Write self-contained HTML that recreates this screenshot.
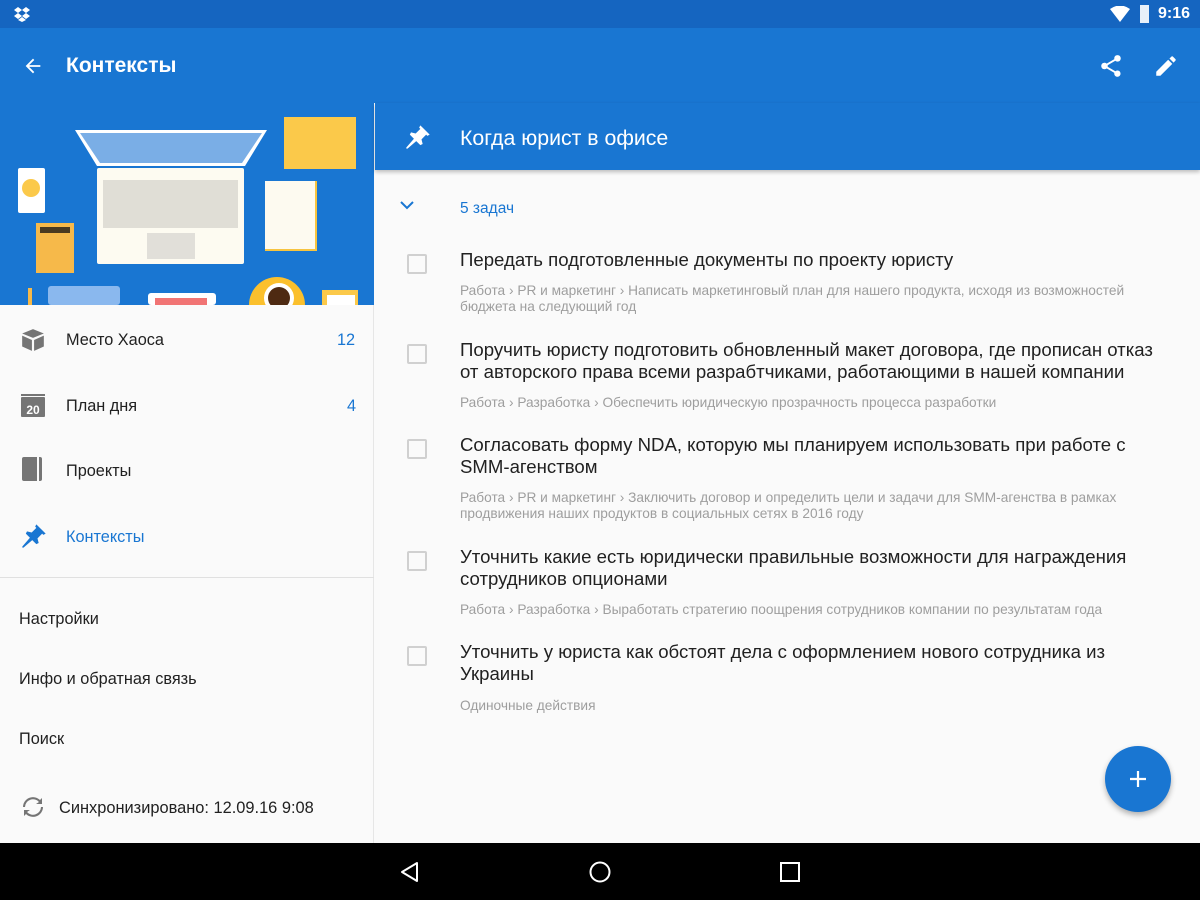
<!DOCTYPE html>
<html><head><meta charset="utf-8"><style>
*{margin:0;padding:0;box-sizing:border-box}
body{width:1200px;height:900px;overflow:hidden;background:#fafafa;font-family:"Liberation Sans","DejaVu Sans",sans-serif;position:relative}
.abs{position:absolute}
.sb{left:0;top:0;width:1200px;height:28px;background:#1565c0}
.tb{left:0;top:28px;width:1200px;height:75px;background:#1976d2}
.t{color:#fff;font-size:22px}
.left{left:0;top:103px;width:374px;height:740px;background:#fafafa;border-right:1px solid #e6e6e6}
.item{position:absolute;left:66px;font-size:16.3px;color:#212121}
.cnt{position:absolute;font-size:16.3px;color:#1976d2}
.rh{left:375px;top:103px;width:825px;height:67px;background:#1976d2;box-shadow:0 2px 4px rgba(0,0,0,.25)}
.task{position:absolute;left:460px;width:716px;font-size:18.6px;line-height:22px;color:#212121}
.sub{position:absolute;left:460px;width:712px;font-size:13.7px;line-height:16px;color:#9e9e9e}
.cb{position:absolute;left:407px;width:20px;height:20px;border:2px solid #d0d0d0;border-radius:2px}
.nav{left:0;top:843px;width:1200px;height:57px;background:#000}
</style></head><body>
<div class="abs sb"></div>
<svg class="abs" style="left:13px;top:6px" width="18" height="16" viewBox="0 0 18 16"><path d="M5 1L1 4l4 3 4-3zM13 1l-4 3 4 3 4-3zM1 10l4 3 4-3-4-3zM17 10l-4-3-4 3 4 3zM5 14l4 2 4-2-4-3z" fill="#fff"/></svg>
<svg class="abs" style="left:1110px;top:6px" width="20" height="16" viewBox="0 0 20 16"><path d="M0 3Q10-4 20 3L10 16z" fill="#fff"/></svg>
<div class="abs" style="left:1140px;top:5px;width:9px;height:18px;background:#fff;opacity:.9"></div>
<div class="abs" style="left:1158px;top:5px;color:#fff;font-size:16px;font-weight:bold">9:16</div>
<div class="abs tb"></div>
<svg class="abs" style="left:22px;top:55px" width="22" height="22" viewBox="0 0 24 24"><path d="M20 11H7.8l5.6-5.6L12 4l-8 8 8 8 1.4-1.4L7.8 13H20z" fill="#fff"/></svg>
<div class="abs t" style="left:66px;top:54px;font-size:21px;font-weight:bold">Контексты</div>
<svg class="abs" style="left:1098px;top:53px" width="26" height="26" viewBox="0 0 24 24"><path d="M18 16.1c-.8 0-1.4.3-2 .8l-7.1-4.2c.1-.2.1-.5.1-.7s0-.5-.1-.7L16 7.2c.5.5 1.2.8 2 .8 1.7 0 3-1.3 3-3s-1.3-3-3-3-3 1.3-3 3c0 .2 0 .5.1.7L8 9.8C7.5 9.3 6.8 9 6 9c-1.700 0-3 1.3-3 3s1.3 3 3 3c.8 0 1.5-.3 2-.8l7.1 4.2c-.1.2-.1.4-.1.6 0 1.6 1.3 2.9 2.9 2.9s2.9-1.3 2.9-2.9-1.2-2.9-2.8-2.9z" fill="#fff"/></svg>
<svg class="abs" style="left:1153px;top:53px" width="26" height="26" viewBox="0 0 24 24"><path d="M3 17.3V21h3.8L17.8 10l-3.8-3.8zM20.7 7c.4-.4.4-1 0-1.4l-2.3-2.3c-.4-.4-1-.4-1.4 0l-1.8 1.8 3.8 3.8z" fill="#fff"/></svg>
<div class="abs left"></div>
<svg class="abs" style="left:0;top:103px" width="374" height="202" viewBox="0 0 374 202">
<rect width="374" height="202" fill="#1976d2"/>
<path d="M75 27H267L245 63H97z" fill="#fff"/><path d="M80 30H262L242 60H100z" fill="#7aaee6"/>
<rect x="97" y="65" width="147" height="96" rx="2" fill="#fdfbf1"/>
<rect x="103" y="77" width="135" height="48" fill="#e0ded6"/><rect x="147" y="130" width="48" height="26" fill="#e1dfd9"/>
<rect x="284" y="14" width="72" height="52" fill="#fbc94a"/>
<rect x="18" y="65" width="27" height="45" rx="2" fill="#fff"/><circle cx="31" cy="85" r="9" fill="#fbc94a"/>
<rect x="36" y="120" width="38" height="50" fill="#f6b94a"/><rect x="40" y="124" width="30" height="6" fill="#4a3a20"/>
<rect x="265" y="78" width="52" height="70" fill="#f7c440"/><rect x="265" y="78" width="50" height="68" fill="#fdfaf0"/>
<circle cx="277" cy="202" r="28" fill="#fbc02d"/><circle cx="279" cy="195" r="15" fill="#fff"/><circle cx="279" cy="195" r="11" fill="#4e2a12"/>
<rect x="48" y="183" width="72" height="19" rx="3" fill="#8ab8ee"/>
<rect x="148" y="190" width="68" height="12" rx="3" fill="#fff"/><rect x="155" y="195" width="52" height="7" fill="#f17474"/>
<rect x="322" y="187" width="36" height="15" fill="#fbc94a"/><rect x="327" y="192" width="28" height="10" fill="#fff"/>
<rect x="28" y="185" width="4" height="17" fill="#f6b94a"/>
</svg>
<svg class="abs" style="left:20px;top:327px" width="26" height="26" viewBox="0 0 24 24"><path d="M2 6l10-4 10 4-10 4zM2 8l9 4v10l-9-4zM22 8l-9 4v10l9-4z" fill="#757575"/></svg>
<div class="item" style="top:331px">Место Хаоса</div><div class="cnt" style="top:331px;left:337px">12</div>
<svg class="abs" style="left:20px;top:392px" width="26" height="26" viewBox="0 0 26 26"><rect x="1" y="5" width="24" height="20" rx="1" fill="#757575"/><rect x="1" y="2" width="24" height="2" fill="#757575"/><text x="13" y="22" font-size="12" font-weight="bold" fill="#fff" text-anchor="middle" font-family="Liberation Sans">20</text></svg>
<div class="item" style="top:397px">План дня</div><div class="cnt" style="top:397px;left:347px">4</div>
<svg class="abs" style="left:22px;top:457px" width="22" height="26" viewBox="0 0 22 26"><rect x="0" y="0" width="20" height="24" rx="2" fill="#757575"/><rect x="15" y="0" width="2" height="24" fill="#fafafa"/></svg>
<div class="item" style="top:462px">Проекты</div>
<svg class="abs" style="left:20px;top:522px" width="28" height="28" viewBox="0 0 24 24"><path d="M14 2l8 8-2 1-1-1-4 4 1 4-2 1-3.5-3.5L3 22l-1 0 0-1 6.5-7.5L5 10l1-2 4 1 4-4-1-1z" fill="#1976d2"/></svg>
<div class="item" style="top:528px;color:#1976d2">Контексты</div>
<div class="abs" style="left:0;top:577px;width:374px;height:1px;background:#e0e0e0"></div>
<div class="abs" style="left:19px;top:610px;font-size:16.3px;color:#212121">Настройки</div>
<div class="abs" style="left:19px;top:670px;font-size:16.3px;color:#212121">Инфо и обратная связь</div>
<div class="abs" style="left:19px;top:730px;font-size:16.3px;color:#212121">Поиск</div>
<svg class="abs" style="left:21px;top:795px" width="24" height="24" viewBox="0 0 24 24"><path d="M4 12a8 8 0 0 1 14-5l-3 2h6V3l-2 2A10 10 0 0 0 2 12zM20 12a8 8 0 0 1-14 5l3-2H3v6l2-2a10 10 0 0 0 17-7z" fill="#757575"/></svg>
<div class="abs" style="left:59px;top:799px;font-size:16.4px;color:#212121">Синхронизировано: 12.09.16 9:08</div>
<div class="abs rh"></div>
<svg class="abs" style="left:404px;top:123px" width="28" height="28" viewBox="0 0 24 24"><path d="M14 2l8 8-2 1-1-1-4 4 1 4-2 1-3.5-3.5L3 22l-1 0 0-1 6.5-7.5L5 10l1-2 4 1 4-4-1-1z" fill="#fff"/></svg>
<div class="abs" style="left:460px;top:126px;color:#fff;font-size:21.3px">Когда юрист в офисе</div>
<svg class="abs" style="left:399px;top:199px" width="16" height="12" viewBox="0 0 16 12"><path d="M2 3l6 6 6-6" stroke="#1976d2" stroke-width="2" fill="none"/></svg>
<div class="abs" style="left:460px;top:200px;font-size:15.5px;color:#1976d2">5 задач</div>
<div class="cb" style="top:254px"></div>
<div class="task" style="top:249px">Передать подготовленные документы по проекту юристу</div>
<div class="sub" style="top:283px">Работа › PR и маркетинг › Написать маркетинговый план для нашего продукта, исходя из возможностей бюджета на следующий год</div>
<div class="cb" style="top:344px"></div>
<div class="task" style="top:339px">Поручить юристу подготовить обновленный макет договора, где прописан отказ от авторского права всеми разрабтчиками, работающими в нашей компании</div>
<div class="sub" style="top:395px">Работа › Разработка › Обеспечить юридическую прозрачность процесса разработки</div>
<div class="cb" style="top:439px"></div>
<div class="task" style="top:434px">Согласовать форму NDA, которую мы планируем использовать при работе с SMM-агенством</div>
<div class="sub" style="top:490px">Работа › PR и маркетинг › Заключить договор и определить цели и задачи для SMM-агенства в рамках продвижения наших продуктов в социальных сетях в 2016 году</div>
<div class="cb" style="top:551px"></div>
<div class="task" style="top:546px">Уточнить какие есть юридически правильные возможности для награждения сотрудников опционами</div>
<div class="sub" style="top:602px">Работа › Разработка › Выработать стратегию поощрения сотрудников компании по результатам года</div>
<div class="cb" style="top:646px"></div>
<div class="task" style="top:641px">Уточнить у юриста как обстоят дела с оформлением нового сотрудника из Украины</div>
<div class="sub" style="top:698px">Одиночные действия</div>
<div class="abs" style="left:1105px;top:746px;width:66px;height:66px;border-radius:50%;background:#1976d2;box-shadow:0 3px 6px rgba(0,0,0,.3)"></div>
<svg class="abs" style="left:1128px;top:769px" width="20" height="20" viewBox="0 0 20 20"><path d="M10 2v16M2 10h16" stroke="#fff" stroke-width="2.2"/></svg>
<div class="abs nav"></div>
<svg class="abs" style="left:398px;top:860px" width="24" height="24" viewBox="0 0 24 24"><path d="M19 3L4 12l15 9z" stroke="#fff" stroke-width="2" fill="none" stroke-linejoin="round"/></svg>
<svg class="abs" style="left:588px;top:860px" width="24" height="24" viewBox="0 0 24 24"><circle cx="12" cy="12" r="9.5" stroke="#fff" stroke-width="2" fill="none"/></svg>
<svg class="abs" style="left:778px;top:860px" width="24" height="24" viewBox="0 0 24 24"><rect x="3" y="3" width="18" height="18" stroke="#fff" stroke-width="2" fill="none"/></svg>
</body></html>
